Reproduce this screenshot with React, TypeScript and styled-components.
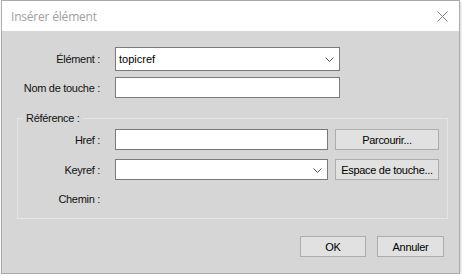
import React from 'react';
import styled, { createGlobalStyle } from 'styled-components';

const GlobalStyle = createGlobalStyle`
  html, body {
    margin: 0;
    padding: 0;
    background: #ffffff;
  }
  body {
    font-family: "Liberation Sans", Arial, sans-serif;
    font-size: 11px;
    color: #000;
  }
`;

const Window = styled.div`
  margin-left: 1px;
  width: 457px;
  height: 272px;
  border: 1px solid #aaaaaa;
  display: flex;
  flex-direction: column;
  box-shadow: 1px 2px 3px rgba(0, 0, 0, 0.18);
`;

const TitleBar = styled.div`
  height: 30px;
  flex: 0 0 30px;
  background: #ffffff;
  display: flex;
  align-items: center;
  justify-content: space-between;
  padding: 0 11px 0 9px;
  box-sizing: border-box;
`;

const Title = styled.span`
  font-family: "Open Sans", "Noto Sans", sans-serif;
  font-size: 12px;
  color: #a0a0a0;
  letter-spacing: -0.2px;
`;

const CloseButton = styled.button`
  width: 11px;
  height: 11px;
  padding: 0;
  border: none;
  background: transparent;
  display: flex;
`;

const Body = styled.div`
  flex: 1;
  background: #d6d6d6;
  padding: 16px 10px 0 15px;
  display: flex;
  flex-direction: column;
`;

const Form = styled.div`
  display: grid;
  grid-template-columns: 83px 225px;
  column-gap: 15px;
  row-gap: 6px;
  align-items: center;
`;

const Label = styled.label`
  text-align: right;
  letter-spacing: -0.3px;
  white-space: nowrap;
  color: #111;
`;

const Field = styled.div<{ $h?: number }>`
  position: relative;
  height: ${p => p.$h ?? 21}px;
  box-sizing: border-box;
  background: #ffffff;
  border: 1px solid #7a7a7a;
  display: flex;
  align-items: center;
  padding: 0 3px;
`;

const Chevron = styled.svg`
  position: absolute;
  right: 5px;
  top: 50%;
  margin-top: -2px;
`;

const Group = styled.fieldset`
  margin: 14px 0 0 0;
  width: 431px;
  box-sizing: border-box;
  border: 1px solid #e4e4e4;
  padding: 5px 8px 8px 0;
  min-inline-size: 0;
`;

const Legend = styled.legend`
  margin-left: 5px;
  padding: 0 3px 0 3px;
  letter-spacing: -0.3px;
  color: #111;
`;

const GroupGrid = styled.div`
  display: grid;
  grid-template-columns: 82px 213px 104px;
  column-gap: 15px;
  row-gap: 9px;
  align-items: center;
  & > :nth-child(3n) {
    margin-left: -8px;
  }
`;

const PushButton = styled.button<{ $w?: number }>`
  width: ${p => p.$w ?? 104}px;
  height: 21px;
  box-sizing: border-box;
  background: #e1e1e1;
  border: 1px solid #adadad;
  font-family: "Liberation Sans", Arial, sans-serif;
  font-size: 11px;
  letter-spacing: -0.3px;
  color: #000;
  padding: 0;
`;

const PathRow = styled.div`
  grid-column: 1 / 2;
  text-align: right;
  letter-spacing: -0.3px;
  height: 21px;
  line-height: 21px;
  color: #111;
`;

const Footer = styled.div`
  display: flex;
  justify-content: flex-end;
  gap: 11px;
  margin-top: 17px;
  padding-right: 5px;
`;

const Combo = ({ value, h }: { value?: string; h?: number }) => (
  <Field $h={h}>
    {value}
    <Chevron width="9" height="5" viewBox="0 0 9 5">
      <path d="M0.5 0.5 L4.5 4.5 L8.5 0.5" fill="none" stroke="#555" strokeWidth="1" />
    </Chevron>
  </Field>
);

export default function App() {
  return (
    <>
      <GlobalStyle />
      <Window>
        <TitleBar>
          <Title>Insérer élément</Title>
          <CloseButton aria-label="Fermer">
            <svg width="11" height="11" viewBox="0 0 11 11">
              <path d="M0.5 0.5 L10.5 10.5 M10.5 0.5 L0.5 10.5" stroke="#808080" strokeWidth="1" />
            </svg>
          </CloseButton>
        </TitleBar>
        <Body>
          <Form>
            <Label>Élément :</Label>
            <Combo value="topicref" h={24} />
            <Label>Nom de touche :</Label>
            <Field />
          </Form>
          <Group>
            <Legend>Référence :</Legend>
            <GroupGrid>
              <Label>Href :</Label>
              <Field />
              <PushButton>Parcourir...</PushButton>
              <Label>Keyref :</Label>
              <Combo />
              <PushButton>Espace de touche...</PushButton>
              <PathRow>Chemin :</PathRow>
            </GroupGrid>
          </Group>
          <Footer>
            <PushButton $w={66}>OK</PushButton>
            <PushButton $w={67}>Annuler</PushButton>
          </Footer>
        </Body>
      </Window>
    </>
  );
}
